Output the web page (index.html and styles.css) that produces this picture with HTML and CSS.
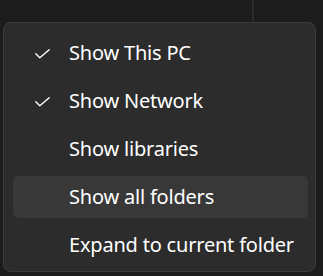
FILE: index.html
```html
<!DOCTYPE html>
<html>
<head>
<meta charset="utf-8">
<link rel="stylesheet" href="styles.css">
</head>
<body>
<div class="top"><div class="pane"></div></div>
<div class="menu">
  <div class="item"><span class="check"><svg width="15" height="10" viewBox="0 0 15 10"><path d="M0.8 4.8 L4.8 8.8 L14.2 0.8" fill="none" stroke="#ffffff" stroke-width="1.4" stroke-linecap="round" stroke-linejoin="round"/></svg></span><span class="label">Show This PC</span></div>
  <div class="item"><span class="check"><svg width="15" height="10" viewBox="0 0 15 10"><path d="M0.8 4.8 L4.8 8.8 L14.2 0.8" fill="none" stroke="#ffffff" stroke-width="1.4" stroke-linecap="round" stroke-linejoin="round"/></svg></span><span class="label">Show Network</span></div>
  <div class="item"><span class="check"></span><span class="label">Show libraries</span></div>
  <div class="item hover"><span class="check"></span><span class="label">Show all folders</span></div>
  <div class="item"><span class="check"></span><span class="label">Expand to current folder</span></div>
</div>
</body>
</html>
```
FILE: styles.css
```css
html, body {
  margin: 0;
  padding: 0;
}
body {
  background: #1c1c1c;
  width: 323px;
  height: 276px;
  overflow: hidden;
  font-family: "Noto Sans", "Open Sans", sans-serif;
  color: #ffffff;
}
.top {
  height: 22px;
}
.pane {
  width: 252px;
  height: 22px;
  border-right: 2px solid #2a2a2a;
}
.menu {
  margin-left: 3px;
  width: 313px;
  height: 250px;
  box-sizing: border-box;
  background: #2c2c2c;
  border: 1px solid #3c3c3c;
  border-radius: 8px;
  padding: 6px 0 2px 0;
}
.item {
  height: 48px;
  display: flex;
  align-items: center;
  position: relative;
}
.hover::after {
  content: "";
  position: absolute;
  left: 9px;
  right: 7px;
  top: 3px;
  bottom: 3px;
  background: #383838;
  border-radius: 5px;
}
.check {
  width: 65px;
  height: 48px;
  display: flex;
  align-items: center;
  padding-left: 31px;
  box-sizing: border-box;
  position: relative;
  z-index: 1;
}
.check svg {
  display: block;
  margin-top: 1px;
}
.label {
  font-size: 20px;
  line-height: 24px;
  letter-spacing: -0.2px;
  position: relative;
  z-index: 1;
}
```
